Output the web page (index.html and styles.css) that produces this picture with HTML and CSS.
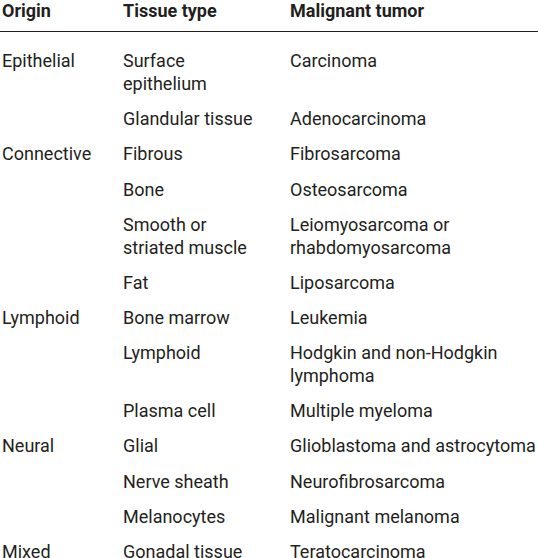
FILE: index.html
```html
<!DOCTYPE html>
<html>
<head>
<meta charset="utf-8">
<link rel="stylesheet" href="styles.css">
</head>
<body>
<table class="tumors">
  <thead>
    <tr><th>Origin</th><th>Tissue type</th><th>Malignant tumor</th></tr>
  </thead>
  <tbody>
    <tr class="first"><td>Epithelial</td><td>Surface<br>epithelium</td><td>Carcinoma</td></tr>
    <tr><td></td><td>Glandular tissue</td><td>Adenocarcinoma</td></tr>
    <tr><td>Connective</td><td>Fibrous</td><td>Fibrosarcoma</td></tr>
    <tr><td></td><td>Bone</td><td>Osteosarcoma</td></tr>
    <tr><td></td><td>Smooth or<br>striated muscle</td><td>Leiomyosarcoma or<br>rhabdomyosarcoma</td></tr>
    <tr><td></td><td>Fat</td><td>Liposarcoma</td></tr>
    <tr><td>Lymphoid</td><td>Bone marrow</td><td>Leukemia</td></tr>
    <tr><td></td><td>Lymphoid</td><td>Hodgkin and non-Hodgkin<br>lymphoma</td></tr>
    <tr><td></td><td>Plasma cell</td><td>Multiple myeloma</td></tr>
    <tr><td>Neural</td><td>Glial</td><td>Glioblastoma and astrocytoma</td></tr>
    <tr><td></td><td>Nerve sheath</td><td>Neurofibrosarcoma</td></tr>
    <tr><td></td><td>Melanocytes</td><td>Malignant melanoma</td></tr>
    <tr><td>Mixed</td><td>Gonadal tissue</td><td>Teratocarcinoma</td></tr>
  </tbody>
</table>
</body>
</html>
```

FILE: styles.css
```css
html, body {
  margin: 0;
  padding: 0;
  background: #ffffff;
}
body {
  font-family: Roboto, "Liberation Sans", sans-serif;
  color: #231f20;
  font-size: 18px;
  overflow: hidden;
}
.tumors {
  border-collapse: collapse;
  width: 538px;
  table-layout: fixed;
}
.tumors th {
  font-weight: bold;
  text-align: left;
  line-height: 22.5px;
  padding: 0 0 8.5px 0;
  border-bottom: 1.5px solid #231f20;
  vertical-align: bottom;
  white-space: nowrap;
}
.tumors td {
  line-height: 22.5px;
  padding: 6.4px 0;
  vertical-align: top;
  white-space: nowrap;
}
.tumors .first td {
  padding-top: 18.4px;
}
.tumors td:first-child, .tumors th:first-child {
  padding-left: 2px;
  width: 121px;
}
.tumors td:nth-child(2), .tumors th:nth-child(2) {
  width: 167px;
}
```
